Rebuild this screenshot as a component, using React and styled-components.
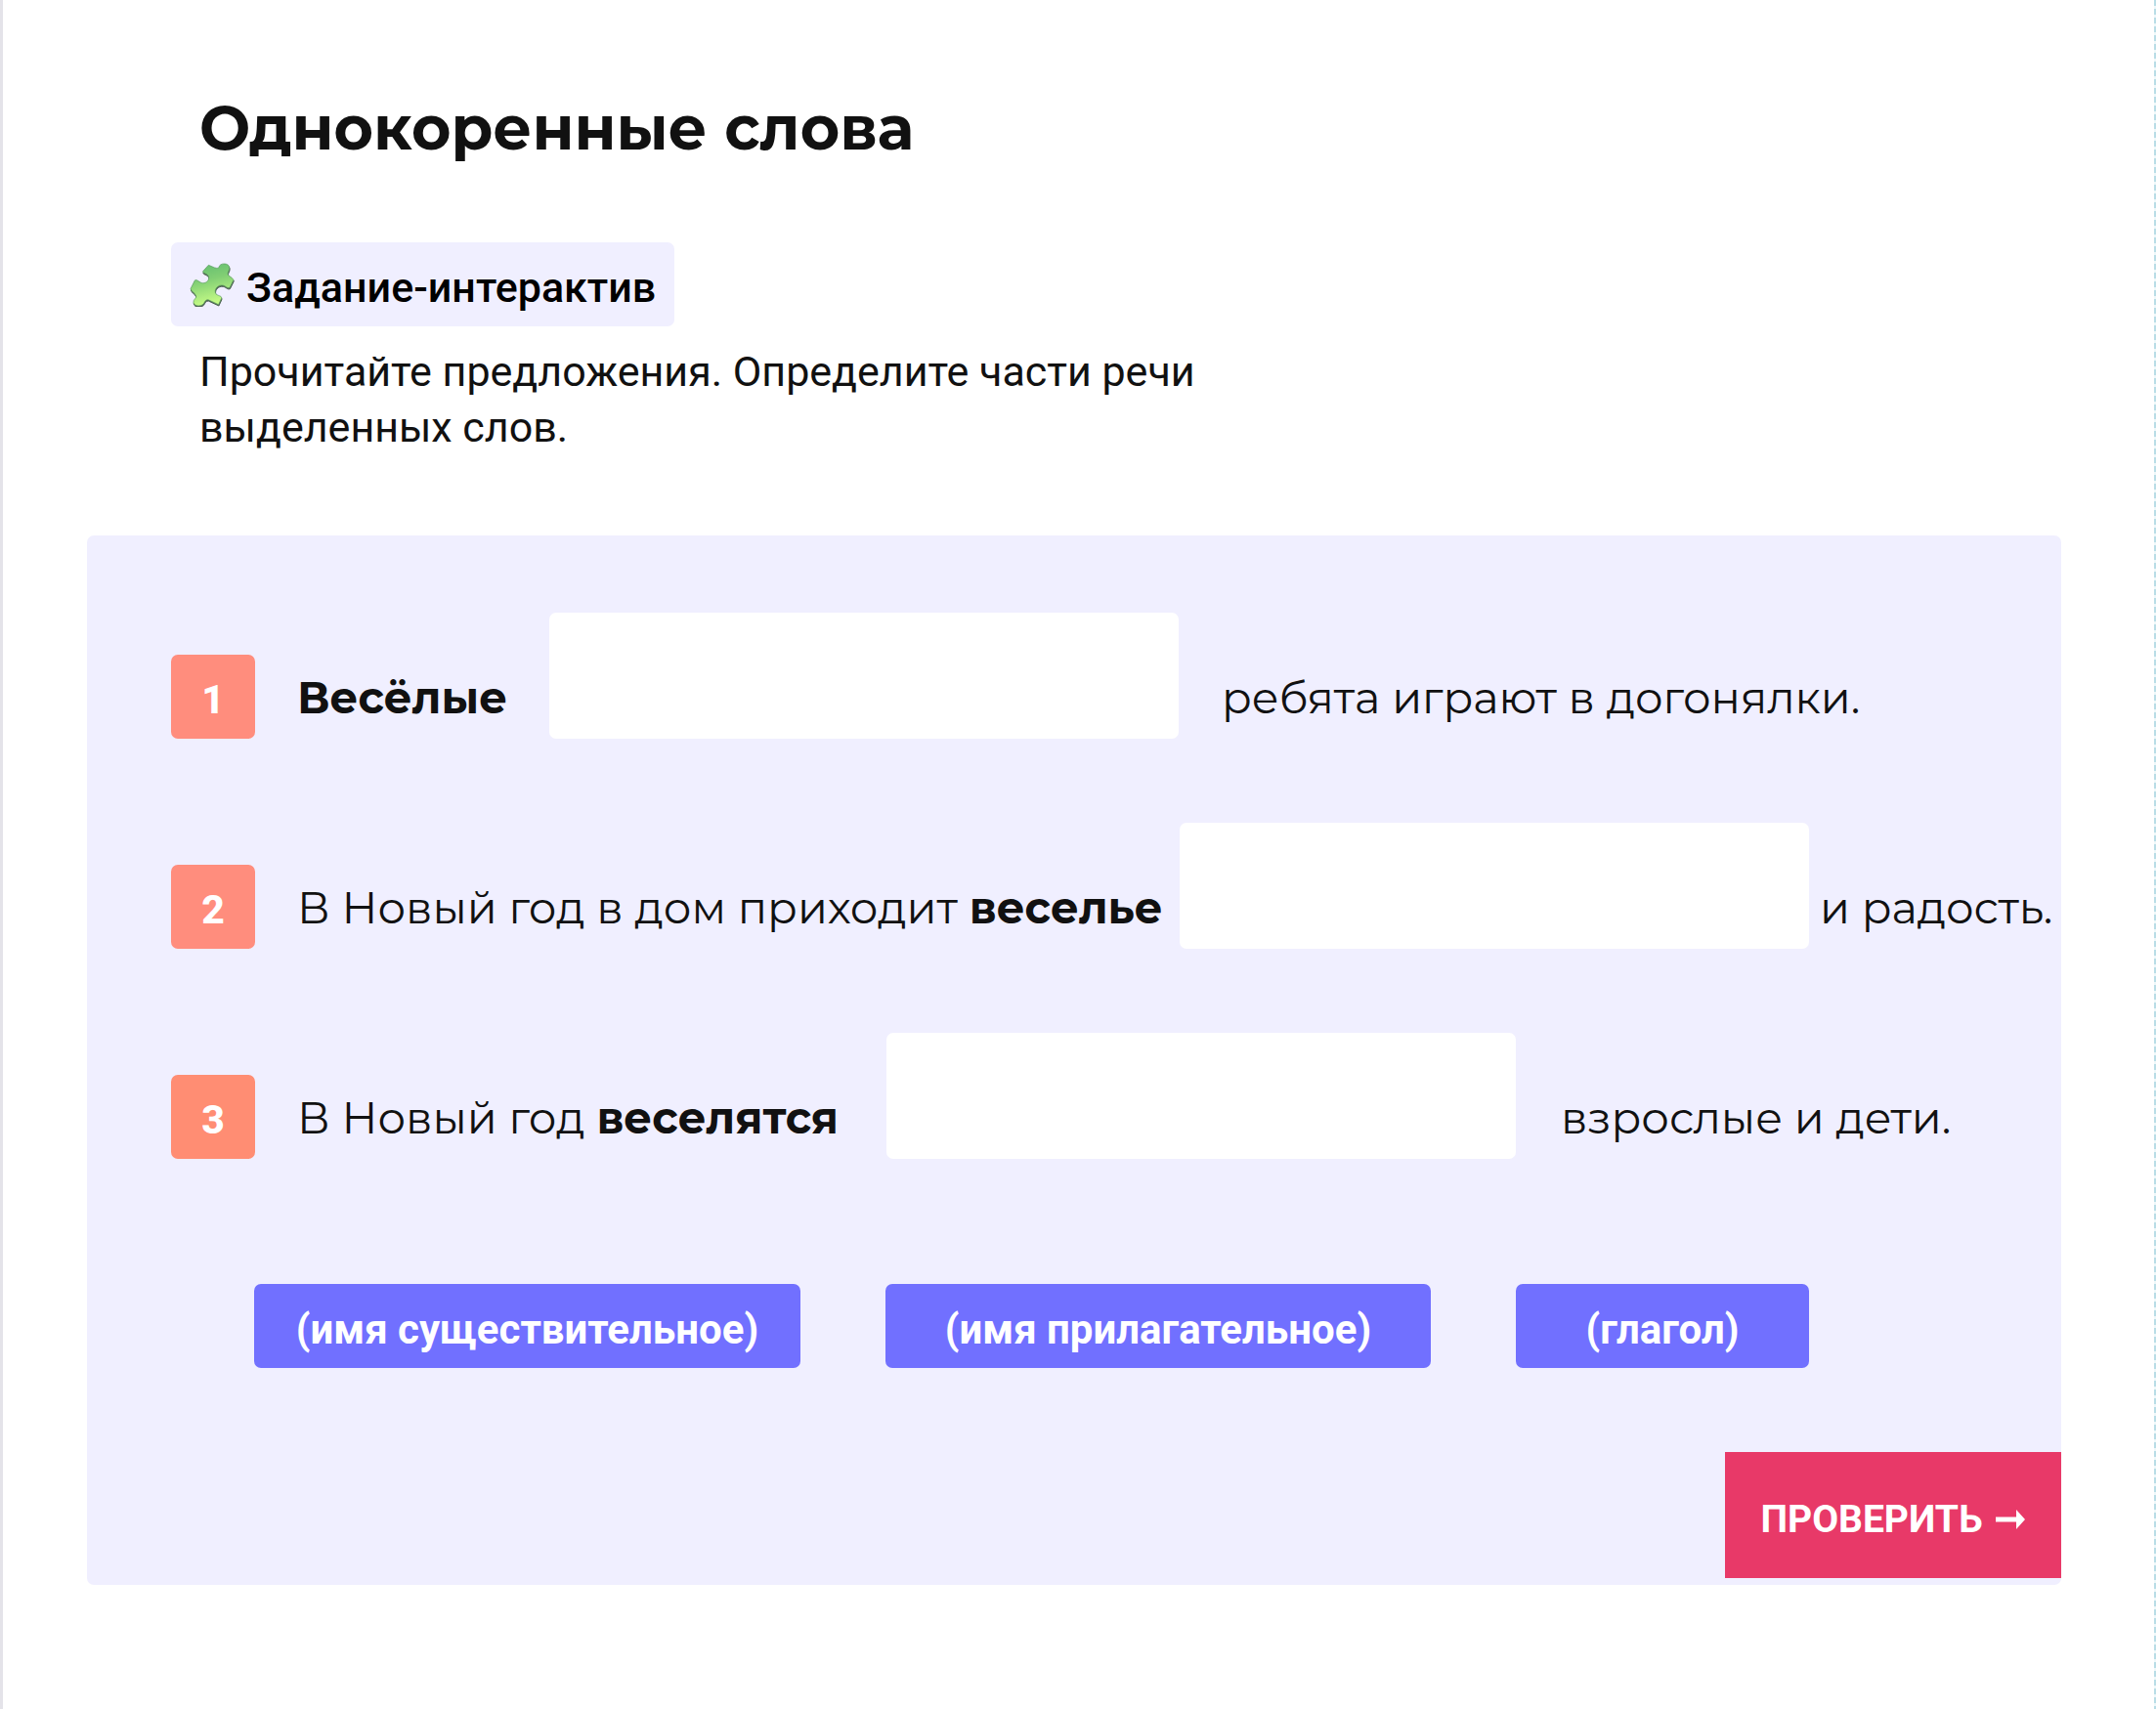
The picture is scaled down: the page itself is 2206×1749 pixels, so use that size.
import React from "react";
import styled, { createGlobalStyle } from "styled-components";

const GlobalStyle = createGlobalStyle`
  *, *::before, *::after { box-sizing: border-box; }
  body { margin: 0; background: #fff; color: #111; }
`;

const display = `Montserrat, Inter, "Open Sans", sans-serif`;
const body = `Roboto, "Noto Sans", sans-serif`;

const Page = styled.main`
  min-height: 100vh;
  display: flex;
  flex-direction: column;
  align-items: stretch;
  padding: 92px 97px 80px 86px;
  border-left: 3px solid #e4e3e9;
  background: repeating-linear-gradient(#b9dde6 0 6px, #eff8fa 6px 9px) right top / 2px 100% no-repeat #fff;
  font-family: ${body};
`;

const Intro = styled.header`
  display: flex;
  flex-direction: column;
  align-items: flex-start;
  padding-left: 86px;
  margin-bottom: 82px;
`;

const Title = styled.h1`
  margin: 0 0 78px;
  padding-left: 29px;
  font: 700 62px/78px ${display};
`;

const Tag = styled.p`
  display: flex;
  align-items: center;
  gap: 12px;
  height: 86px;
  margin: 0 0 18px;
  padding: 0 19px;
  border-radius: 7px;
  background: #f0efff;
  color: #000;
  font-size: 43px;
  font-weight: 500;
`;

const TagText = styled.span`
  padding-top: 6px;
`;

const Brief = styled.p`
  max-width: 1100px;
  margin: 0;
  padding-left: 29px;
  font-size: 43px;
  line-height: 57px;
`;

const Panel = styled.form`
  display: flex;
  flex-direction: column;
  padding: 79px 0 7px;
  border-radius: 7px;
  background: #f0efff;
`;

const Sentences = styled.ol`
  display: flex;
  flex-direction: column;
  gap: 86px;
  margin: 0 0 128px;
  padding: 0 0 0 86px;
  list-style: none;
`;

const Sentence = styled.li`
  display: flex;
  align-items: flex-end;
`;

const Badge = styled.span`
  flex: none;
  display: grid;
  place-items: center;
  width: 86px;
  height: 86px;
  margin-right: 43px;
  padding-top: 6px;
  border-radius: 7px;
  background: ${(p) => p.$color};
  color: #fff;
  font-size: 41px;
  font-weight: 800;
`;

const Words = styled.span`
  flex: none;
  min-width: ${(p) => p.$width || 0}px;
  padding-bottom: 12px;
  font: 400 45px/60px ${display};
  white-space: nowrap;
`;

const Blank = styled.input`
  flex: none;
  width: 644px;
  height: 129px;
  margin-right: ${(p) => p.$gap}px;
  padding: 0 30px;
  border: 0;
  border-radius: 7px;
  background: #fff;
  color: #111;
  font: 400 43px ${body};
`;

const Choices = styled.div`
  display: flex;
  gap: 87px;
  margin-bottom: 86px;
  padding-left: 171px;
`;

const Choice = styled.button`
  width: ${(p) => p.$width}px;
  height: 86px;
  padding: 6px 0 0;
  border: 0;
  border-radius: 7px;
  background: #7170ff;
  color: #fff;
  font: 700 42px ${body};
  white-space: nowrap;
`;

const Check = styled.button`
  align-self: flex-end;
  display: flex;
  align-items: center;
  justify-content: center;
  gap: 12px;
  width: 344px;
  height: 129px;
  padding: 8px 0 0;
  border: 0;
  background: #e83968;
  color: #fff;
  font: 700 39px ${body};
`;

const Puzzle = () => (
  <svg width="46" height="46" viewBox="43 39 140 140" aria-hidden="true">
    <defs>
      <linearGradient id="leaf" x1="0" y1="0" x2="0.25" y2="1">
        <stop offset="0" stopColor="#5fbb70" />
        <stop offset="0.45" stopColor="#82cf74" />
        <stop offset="1" stopColor="#c5fb86" />
      </linearGradient>
    </defs>
    <g strokeLinejoin="round">
      <path
        transform="translate(1 4)"
        fill="#4c5f50"
        stroke="#4c5f50"
        strokeWidth="3"
        d="M102 49L121 57C131 60 134 58 135 54C137 43 159 42 165 51C171 62 162 68 162 76C162 83 173 84 180 95L168 119C160 123 155 113 146 112C132 110 121 122 123 134C126 147 145 142 142 153L133 172L101 157C92 156 90 165 86 170C78 179 57 177 55 166C54 154 66 153 63 145C60 136 50 134 46 123L59 97C66 91 74 105 84 105C96 106 106 94 102 84C98 74 86 77 84 69Z"
      />
      <path
        fill="url(#leaf)"
        stroke="#5a9a5e"
        strokeWidth="2"
        d="M102 49L121 57C131 60 134 58 135 54C137 43 159 42 165 51C171 62 162 68 162 76C162 83 173 84 180 95L168 119C160 123 155 113 146 112C132 110 121 122 123 134C126 147 145 142 142 153L133 172L101 157C92 156 90 165 86 170C78 179 57 177 55 166C54 154 66 153 63 145C60 136 50 134 46 123L59 97C66 91 74 105 84 105C96 106 106 94 102 84C98 74 86 77 84 69Z"
      />
    </g>
  </svg>
);

const Arrow = () => (
  <svg width="32" height="26" viewBox="0 0 32 26" fill="#fff" aria-hidden="true">
    <path d="M1 10.5H22V3L31 13L22 23V15.5H1Z" />
  </svg>
);

const sentences = [
  { color: "#ff8d7d", width: 258, gap: 44, start: "", key: "Весёлые", end: "ребята играют в догонялки." },
  { color: "#ff8d7d", width: 903, gap: 11, start: "В Новый год в дом приходит ", key: "веселье", end: "и радость." },
  { color: "#ff8d73", width: 603, gap: 46, start: "В Новый год ", key: "веселятся", end: "взрослые и дети." },
];

const choices = [
  { text: "(имя существительное)", width: 559 },
  { text: "(имя прилагательное)", width: 558 },
  { text: "(глагол)", width: 300 },
];

export default function App() {
  return (
    <>
      <GlobalStyle />
      <Page>
        <Intro>
          <Title>Однокоренные слова</Title>
          <Tag>
            <Puzzle />
            <TagText>Задание-интерактив</TagText>
          </Tag>
          <Brief>
            Прочитайте предложения. Определите части речи выделенных слов.
          </Brief>
        </Intro>
        <Panel onSubmit={(e) => e.preventDefault()}>
          <Sentences>
            {sentences.map((s, i) => (
              <Sentence key={s.key}>
                <Badge $color={s.color}>{i + 1}</Badge>
                <Words $width={s.width} as="label" htmlFor={`blank-${i}`}>
                  {s.start}
                  <b>{s.key}</b>
                </Words>
                <Blank id={`blank-${i}`} type="text" $gap={s.gap} />
                <Words>{s.end}</Words>
              </Sentence>
            ))}
          </Sentences>
          <Choices>
            {choices.map((c) => (
              <Choice key={c.text} type="button" $width={c.width}>
                {c.text}
              </Choice>
            ))}
          </Choices>
          <Check type="submit">
            ПРОВЕРИТЬ
            <Arrow />
          </Check>
        </Panel>
      </Page>
    </>
  );
}
